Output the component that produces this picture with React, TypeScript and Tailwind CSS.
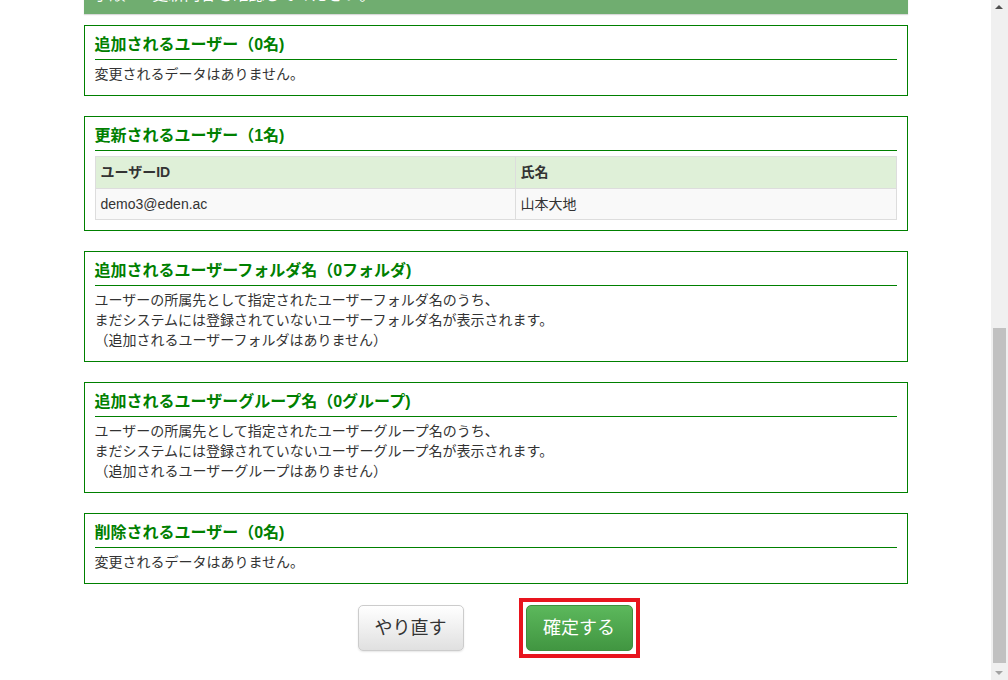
const font = "font-['Liberation_Sans','Noto_Sans_CJK_JP',sans-serif]";

function Section({ title, children }: { title: string; children: React.ReactNode }) {
  return (
    <div className="border border-[#008000] bg-white px-[10px] pt-[9px] pb-[11px]">
      <h3 className="text-[16px] font-bold leading-[20px] text-[#008000] pb-[4px] border-b border-[#008000]">
        {title}
      </h3>
      <div className="mt-[4px] text-[14px] leading-[20px] text-[#333]">{children}</div>
    </div>
  );
}

export default function App() {
  const updated = [{ id: "demo3@eden.ac", name: "山本大地" }];

  return (
    <div className={`${font} flex h-[680px] w-[1008px] overflow-hidden bg-white`}>
      {/* page body */}
      <div className="w-[991px] flex-none">
        <div className="mx-auto w-[824px]">
          <div className="mt-[-26px] h-[40px] bg-[#70ad70] px-[10px] pt-[11px] text-[16px] leading-[20px] text-white shadow-[0_1px_1px_rgba(0,0,0,0.15)]">
            手順3/3 更新内容を確認してください。
          </div>

          <div className="mt-[11px] flex flex-col gap-[20px]">
            <Section title="追加されるユーザー（0名)">変更されるデータはありません。</Section>

            <div className="border border-[#008000] bg-white px-[10px] pt-[9px] pb-[10px]">
              <h3 className="text-[16px] font-bold leading-[20px] text-[#008000] pb-[4px] border-b border-[#008000]">
                更新されるユーザー（1名)
              </h3>
              <table className="mt-[5px] w-full border-collapse text-[14px] text-[#333]">
                <thead>
                  <tr className="bg-[#dff0d8]">
                    <th className="w-[420px] border border-[#ddd] px-[5px] h-[32px] text-left font-bold">ユーザーID</th>
                    <th className="border border-[#ddd] px-[5px] h-[32px] text-left font-bold">氏名</th>
                  </tr>
                </thead>
                <tbody>
                  {updated.map((u) => (
                    <tr key={u.id} className="bg-[#f9f9f9]">
                      <td className="border border-[#ddd] px-[5px] h-[31px]">{u.id}</td>
                      <td className="border border-[#ddd] px-[5px] h-[31px]">{u.name}</td>
                    </tr>
                  ))}
                </tbody>
              </table>
            </div>

            <Section title="追加されるユーザーフォルダ名（0フォルダ)">
              <p>ユーザーの所属先として指定されたユーザーフォルダ名のうち、</p>
              <p>まだシステムには登録されていないユーザーフォルダ名が表示されます。</p>
              <p>（追加されるユーザーフォルダはありません）</p>
            </Section>

            <Section title="追加されるユーザーグループ名（0グループ)">
              <p>ユーザーの所属先として指定されたユーザーグループ名のうち、</p>
              <p>まだシステムには登録されていないユーザーグループ名が表示されます。</p>
              <p>（追加されるユーザーグループはありません）</p>
            </Section>

            <Section title="削除されるユーザー（0名)">変更されるデータはありません。</Section>
          </div>

          <div className="mt-[14px] flex items-center justify-center gap-[55px] pl-[6px]">
            <button
              type="button"
              className="h-[46px] w-[106px] rounded-[5px] border border-[#ccc] bg-gradient-to-b from-white to-[#e0e0e0] text-[18px] text-[#333] shadow-[0_1px_2px_rgba(0,0,0,0.1)]"
            >
              やり直す
            </button>
            <div className="border-[4px] border-[#e8141e] p-[3px]">
              <button
                type="button"
                className="block h-[46px] w-[107px] rounded-[5px] border border-[#3e8f3e] bg-gradient-to-b from-[#5cb85c] to-[#419641] text-[18px] text-white"
              >
                確定する
              </button>
            </div>
          </div>
        </div>
      </div>

      {/* scrollbar */}
      <div className="relative w-[17px] flex-none bg-[#f0f0f0]">
        <div className="absolute left-[4px] top-[5px] h-0 w-0 border-x-[4px] border-b-[4px] border-x-transparent border-b-[#505050]" />
        <div className="absolute left-[2px] top-[328px] h-[335px] w-[13px] bg-[#c1c1c1]" />
        <div className="absolute left-[4px] top-[671px] h-0 w-0 border-x-[4px] border-t-[4px] border-x-transparent border-t-[#a3a3a3]" />
      </div>
    </div>
  );
}
